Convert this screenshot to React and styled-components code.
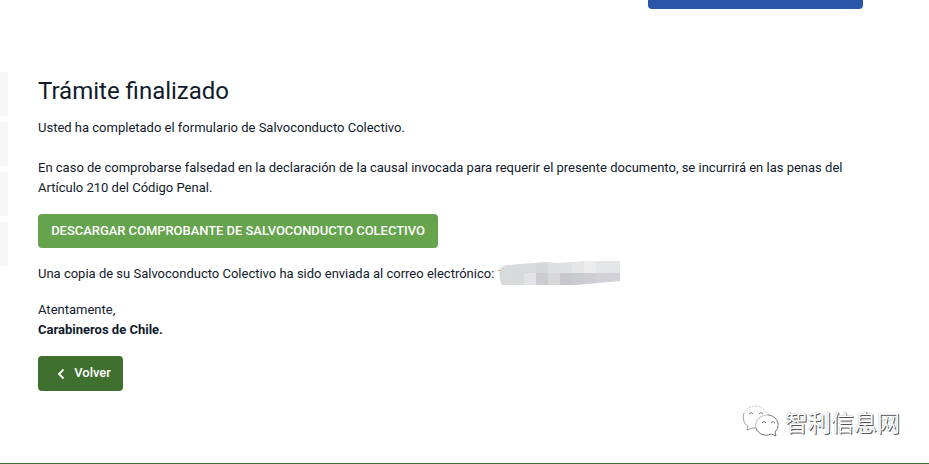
import styled, { createGlobalStyle } from "styled-components"

const GlobalStyle = createGlobalStyle`
    * {
        box-sizing: border-box;
    }
    body {
        margin: 0;
        background: #fff;
        color: #111a2b;
        font-family: Roboto, "Liberation Sans", sans-serif;
        font-size: 13px;
        line-height: 20px;
        overflow: hidden;
    }
`

const Page = styled.div`
    display: flex;
    flex-direction: column;
    width: 929px;
    height: 464px;
    overflow: hidden;
`

const Header = styled.header`
    display: flex;
    justify-content: flex-end;
    height: 9px;
    padding-right: 66px;
`

const HeaderButton = styled.div`
    width: 215px;
    height: 9px;
    border-radius: 0 0 4px 4px;
    background: #2a56a8;
`

const Main = styled.main`
    display: flex;
    gap: 30px;
    height: 391px;
    padding-top: 63px;
`

const Steps = styled.aside`
    display: flex;
    flex-direction: column;
    gap: 6px;
    width: 8px;
`

const Step = styled.div`
    height: 44px;
    border-radius: 0 2px 2px 0;
    background: #f7f7f7;
`

const Content = styled.section`
    display: flex;
    flex-direction: column;
    align-items: flex-start;
    width: 840px;
`

const Title = styled.h1`
    margin: 4px 0 12px;
    font-size: 24px;
    font-weight: 400;
    line-height: 30px;
`

const Paragraph = styled.p`
    margin: 0 0 ${({ $gap }) => $gap}px;
    white-space: nowrap;
`

const Strong = styled.strong`
    font-weight: 700;
`

const Button = styled.button`
    display: flex;
    align-items: center;
    justify-content: center;
    width: ${({ $width }) => $width}px;
    height: ${({ $height }) => $height}px;
    margin: 0 0 ${({ $gap }) => $gap || 0}px;
    padding: 0 0 2px;
    border: 0;
    border-radius: 4px;
    background: ${({ $color }) => $color};
    color: #fff;
    font-family: inherit;
    font-size: 13px;
    font-weight: 500;
    letter-spacing: -0.05px;
    white-space: nowrap;
`

const BackIcon = styled.svg`
    width: 8px;
    height: 12px;
    margin: 2px 9px 0 7px;
`

const MailRow = styled.div`
    display: flex;
    height: 36px;
`

const Censored = styled.svg`
    width: 122px;
    height: 26px;
    margin: -4px 0 0 4px;
`

const Footer = styled.footer`
    display: flex;
    justify-content: flex-end;
    height: 64px;
    padding: 3px 29px 0 0;
    border-bottom: 1px solid #3f702f;
`

const Watermark = styled.div`
    display: flex;
    align-items: flex-start;
    gap: 5px;
    height: 40px;
`

const ChatLogo = styled.svg`
    width: 38px;
    height: 36px;
    margin-top: 2px;
`

const WatermarkText = styled.span`
    color: #fff;
    font-family: "Noto Sans CJK SC", sans-serif;
    font-size: 23px;
    font-weight: 400;
    line-height: 36px;
    text-shadow: 1px 1px 0 #555, 0 0 1px #999;
`

const blocks = [
    ["#d9dadc", "#d9dadc", "#d9dadb", "#d5d6d8", "#dddfe1", "#dfe0e2", "#e4e5e7", "#ececed", "#e4e5e7", "#e4e5e7"],
    ["#d8dadc", "#d8d9db", "#e2e3e5", "#ccccd0", "#d7d8da", "#c9c7cb", "#c8cccd", "#cecdd2", "#d1d1d6", "#d1d0d7"],
]

const App = () => {
    return (
        <>
            <GlobalStyle />
            <Page>
                <Header>
                    <HeaderButton />
                </Header>
                <Main>
                    <Steps>
                        <Step />
                        <Step />
                        <Step />
                        <Step />
                    </Steps>
                    <Content>
                        <Title>Trámite finalizado</Title>
                        <Paragraph $gap={20}>Usted ha completado el formulario de Salvoconducto Colectivo.</Paragraph>
                        <Paragraph $gap={16}>
                            En caso de comprobarse falsedad en la declaración de la causal invocada para requerir el presente documento, se incurrirá en las penas del
                            <br />
                            Artículo 210 del Código Penal.
                        </Paragraph>
                        <Button $width={400} $height={34} $gap={16} $color="#65a34d">
                            DESCARGAR COMPROBANTE DE SALVOCONDUCTO COLECTIVO
                        </Button>
                        <MailRow>
                            <Paragraph $gap={0}>Una copia de su Salvoconducto Colectivo ha sido enviada al correo electrónico:</Paragraph>
                            <Censored viewBox="0 0 122 26">
                                <defs>
                                    <clipPath id="smudge">
                                        <path d="M2 9Q4 6 9 5L48 2L60 3L88 1H122V21L78 25H4Q0 19 2 9Z" />
                                    </clipPath>
                                </defs>
                                <g clipPath="url(#smudge)">
                                    {blocks.map((row, y) => row.map((fill, x) => (
                                        <rect key={`${x}-${y}`} x={x ? x * 12 + 2 : 0} y={y * 12 + 1} width={x ? 12 : 14} height="12" fill={fill} shapeRendering="crispEdges" />
                                    )))}
                                </g>
                                <path d="M0 10.5H2" stroke="#e5a04a" />
                            </Censored>
                        </MailRow>
                        <Paragraph $gap={16}>
                            Atentamente,
                            <br />
                            <Strong>Carabineros de Chile.</Strong>
                        </Paragraph>
                        <Button $width={85} $height={35} $color="#3f702f">
                            <BackIcon viewBox="0 0 8 12">
                                <path d="M6.5 1.5L2 6L6.5 10.5" fill="none" stroke="#fff" strokeWidth="1.8" />
                            </BackIcon>
                            Volver
                        </Button>
                    </Content>
                </Main>
                <Footer>
                    <Watermark>
                        <ChatLogo viewBox="0 0 38 36" fill="none" strokeWidth="0.8">
                            <path d="M26 10C24 5 19 1 13 1C8 1 4 4 2 8" stroke="#bbb" strokeDasharray="2 1" />
                            <path d="M2 8C0 13 2 19 6 21L5 25L10 23H14" stroke="#888" />
                            <path d="M14 23C12 15 19 10 26 10" stroke="#aaa" />
                            <path d="M26 10C36 11 39 21 33 27L34 31L29 29C23 32 16 29 14 23" stroke="#555" />
                            <path d="M7 9Q9 6 11 9M17 9Q19 6 21 9M20 18Q22 15 24 18M29 18Q31 15 33 18" stroke="#555" />
                        </ChatLogo>
                        <WatermarkText>智利信息网</WatermarkText>
                    </Watermark>
                </Footer>
            </Page>
        </>
    )
}

export default App
